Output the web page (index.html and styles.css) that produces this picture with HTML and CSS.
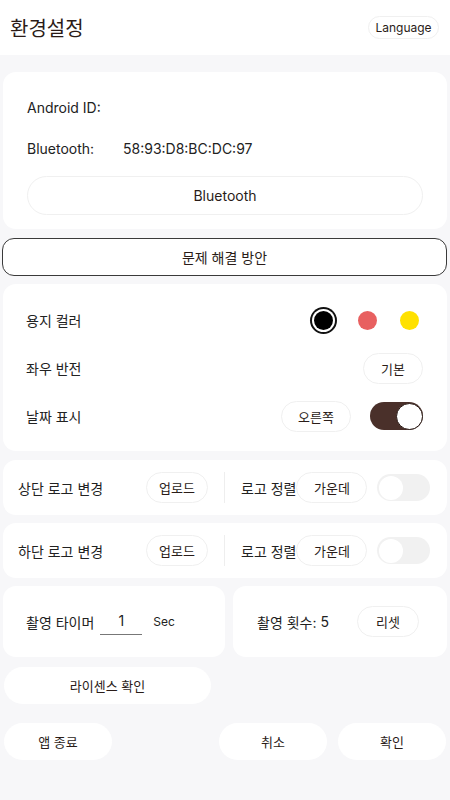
FILE: index.html
```html
<!DOCTYPE html>
<html lang="ko">
<head>
  <meta charset="UTF-8">
  <title>환경설정</title>
  <link rel="stylesheet" href="styles.css">
</head>
<body>
  <header class="topbar">
    <h1>환경설정</h1>
    <button class="pill lang">Language</button>
  </header>

  <main class="content">
    <!-- 기기 정보 -->
    <section class="card device">
      <div class="info-row">Android ID:</div>
      <div class="info-row"><span class="info-key">Bluetooth:</span><span>58:93:D8:BC:DC:97</span></div>
      <button class="pill wide">Bluetooth</button>
    </section>

    <button class="trouble">문제 해결 방안</button>

    <!-- 출력 설정 -->
    <section class="card options">
      <div class="opt-row">
        <span>용지 컬러</span>
        <div class="dots">
          <span class="dot black selected"></span>
          <span class="dot red"></span>
          <span class="dot yellow"></span>
        </div>
      </div>
      <div class="opt-row">
        <span>좌우 반전</span>
        <button class="pill small">기본</button>
      </div>
      <div class="opt-row">
        <span>날짜 표시</span>
        <div class="controls">
          <button class="pill small side">오른쪽</button>
          <span class="switch on"><span class="knob"></span></span>
        </div>
      </div>
    </section>

    <!-- 로고 -->
    <section class="card logo-row">
      <span class="logo-label">상단 로고 변경</span>
      <button class="pill small upload">업로드</button>
      <span class="divider"></span>
      <span>로고 정렬</span>
      <button class="pill small align">가운데</button>
      <span class="switch off"><span class="knob"></span></span>
    </section>

    <section class="card logo-row">
      <span class="logo-label">하단 로고 변경</span>
      <button class="pill small upload">업로드</button>
      <span class="divider"></span>
      <span>로고 정렬</span>
      <button class="pill small align">가운데</button>
      <span class="switch off"><span class="knob"></span></span>
    </section>

    <div class="split">
      <section class="card half timer">
        <span>촬영 타이머</span>
        <span class="num-input">1</span>
        <span class="unit">Sec</span>
      </section>
      <section class="card half count">
        <span>촬영 횟수:</span>
        <span class="count-val">5</span>
        <button class="pill small reset">리셋</button>
      </section>
    </div>

    <button class="plain license">라이센스 확인</button>

    <div class="footer">
      <button class="plain foot">앱 종료</button>
      <div class="foot-right">
        <button class="plain foot">취소</button>
        <button class="plain foot">확인</button>
      </div>
    </div>
  </main>
</body>
</html>
```

FILE: styles.css
```css
* {
  box-sizing: border-box;
}
body {
  margin: 0;
  font-family: Inter, "Noto Sans CJK KR", sans-serif;
  background: #f7f7f9;
  color: #222;
  font-size: 14px;
}
button {
  font-family: inherit;
  color: #2a1c18;
  cursor: pointer;
}
.topbar {
  height: 55px;
  background: #fff;
  display: flex;
  justify-content: space-between;
  align-items: center;
  padding: 0 11px 0 10px;
}
.topbar h1 {
  margin: 0;
  font-size: 20px;
  font-weight: 400;
  color: #2b1b17;
}
.pill {
  background: #fff;
  border: 1.5px solid #f0f0f0;
  border-radius: 999px;
  font-size: 13px;
  padding: 0;
}
.lang {
  width: 71px;
  height: 23px;
  font-size: 12px;
}
.content {
  padding: 17px 3px 0;
  display: flex;
  flex-direction: column;
}
.card {
  background: #fff;
  border-radius: 13px;
}
.device {
  padding: 22px 24px 14px;
  display: flex;
  flex-direction: column;
  gap: 15px;
}
.info-row {
  height: 26px;
  display: flex;
  align-items: center;
}
.info-key {
  width: 96px;
}
.wide {
  height: 39px;
  font-size: 14px;
}
.trouble {
  margin: 9px 0 8px -1px;
  height: 38px;
  background: #fff;
  border: 1px solid #3a3a3a;
  border-radius: 12px;
  font-size: 14px;
}
.options {
  padding: 20px 24px 19px 23px;
  display: flex;
  flex-direction: column;
  gap: 16px;
}
.opt-row {
  height: 32px;
  display: flex;
  justify-content: space-between;
  align-items: center;
}
.dots {
  display: flex;
  align-items: center;
  gap: 23px;
  margin-right: 4px;
}
.dot {
  width: 19px;
  height: 19px;
  border-radius: 50%;
}
.dot.black {
  background: #000;
}
.dot.selected {
  box-shadow: 0 0 0 2px #fff, 0 0 0 4px #111;
  margin-right: 2px;
}
.dot.red {
  background: #e86060;
}
.dot.yellow {
  background: #ffe100;
}
.small {
  width: 60px;
  height: 31px;
}
.controls {
  display: flex;
  align-items: center;
  gap: 19px;
}
.side {
  width: 70px;
}
.switch {
  width: 53px;
  height: 28px;
  border-radius: 14px;
  display: flex;
  align-items: center;
  padding: 0 2px;
}
.switch .knob {
  width: 24px;
  height: 24px;
  border-radius: 50%;
  background: #fff;
}
.switch.on {
  background: #4a302a;
  justify-content: flex-end;
  padding: 0;
}
.switch.on .knob {
  width: 27px;
  height: 27px;
  border: 1.5px solid #2a1a15;
}
.switch.off {
  background: #f1f1f1;
  height: 27px;
}
.logo-row {
  margin-top: 9px;
  height: 55px;
  display: flex;
  align-items: center;
  padding-left: 15px;
}
.logo-row + .logo-row {
  margin-top: 8px;
}
.logo-label {
  width: 128px;
}
.upload {
  width: 62px;
}
.divider {
  width: 1px;
  height: 31px;
  background: #eee;
  margin: 0 16px;
}
.align {
  width: 71px;
  margin-left: 0;
}
.logo-row .switch {
  margin-left: 10px;
}
.split {
  margin-top: 8px;
  display: grid;
  grid-template-columns: 222px 1fr;
  gap: 8px;
}
.half {
  height: 71px;
  display: flex;
  align-items: center;
}
.timer {
  padding-left: 23px;
}
.num-input {
  width: 42px;
  margin-left: 6px;
  height: 26px;
  padding-top: 3px;
  text-align: center;
  border-bottom: 1px solid #777;
}
.unit {
  margin-left: 11px;
  font-size: 12px;
}
.count {
  padding-left: 24px;
}
.count-val {
  margin-left: 4px;
}
.reset {
  width: 62px;
  margin-left: 28px;
}
.plain {
  background: #fff;
  border: none;
  border-radius: 999px;
  font-size: 13px;
  height: 37px;
}
.license {
  margin: 10px 0 0 1px;
  width: 207px;
}
.footer {
  margin-top: 19px;
  display: flex;
  justify-content: space-between;
  padding: 0 1px;
}
.foot {
  width: 108px;
}
.foot-right {
  display: flex;
  gap: 11px;
}
```
